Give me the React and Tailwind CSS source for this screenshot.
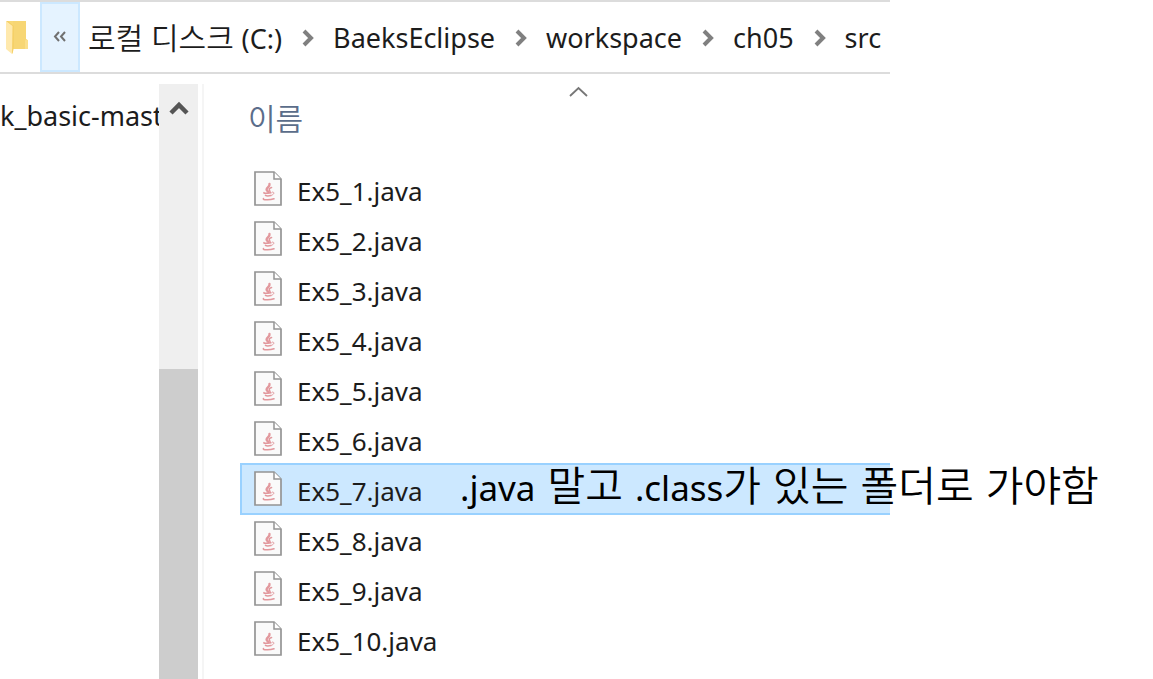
import React from "react";

const files = Array.from({ length: 10 }, (_, i) => `Ex5_${i + 1}.java`);
const crumbs = ["로컬 디스크 (C:)", "BaeksEclipse", "workspace", "ch05", "src"];
const note = ".java 말고 .class가 있는 폴더로 가야함";

const HANGUL_RUN = /([\uac00-\ud7a3 ]*[\uac00-\ud7a3][\uac00-\ud7a3 ]*)/;

// Sets Hangul runs a little larger and lighter than the Latin text beside them.
function Mixed({ text, hangul }) {
  return text.split(HANGUL_RUN).map((part, i) =>
    i % 2 === 1 ? (
      <span key={i} className={hangul}>
        {part}
      </span>
    ) : (
      part
    )
  );
}

function FolderIcon() {
  return (
    <svg width="22" height="34" viewBox="0 0 22 34" className="shrink-0" aria-hidden="true">
      <path d="M1 1h19v18l2 1.500V29H6z" fill="#f8d978" />
      <path d="M7 1h13v18l-1 1.500V29H7z" fill="#f7d674" />
      <path d="M19 20.500l1.500-1.500 1.500 1.500V29h-3z" fill="#fbdf8a" />
      <path d="M0 1l7 4.500V31l-1 3-6-5z" fill="#ffe9ad" />
      <path d="M0 1h2l6 5v21l-1.500 7L6 33 6.500 6z" fill="#f5d067" />
    </svg>
  );
}

function Chevron() {
  return (
    <svg width="15" height="20" viewBox="0 0 15 20" className="shrink-0" aria-hidden="true">
      <path d="M4 3l7 7-7 7" fill="none" stroke="#808080" strokeWidth="4" />
    </svg>
  );
}

function JavaFileIcon() {
  return (
    <svg width="28" height="36" viewBox="0 0 28 36" className="shrink-0" aria-hidden="true">
      <path d="M1 1h19l7 7v26H1z" fill="#fafafa" stroke="#949494" strokeWidth="1.7" />
      <path d="M20 1v7h7" fill="#fff" stroke="#949494" strokeWidth="1.5" />
      <g fill="none" stroke="#e2989d" strokeLinecap="round">
        <path d="M15.500 13c.8 3-4.500 4-2.500 6.500l1.500 1.500" strokeWidth="2.4" />
        <path d="M17.500 16.500c-3 1-2.500 2-1.500 4" strokeWidth="1.6" />
        <path d="M10 21.500c-1 1 2 1 7 .3" strokeWidth="1.4" />
        <path d="M18.500 21c2.500 0 1.500 2.500-.5 3" strokeWidth="1" />
        <path d="M11.500 24.300c1 .8 3 .8 5.500.2" strokeWidth="1.6" />
        <path d="M9.500 27.500c-1.500 1.500 6 1.800 10.500.3" strokeWidth="1.600" />
      </g>
    </svg>
  );
}

export default function App() {
  return (
    <div className="min-h-screen overflow-x-hidden bg-white font-['Noto_Sans','Noto_Sans_CJK_KR',sans-serif] text-[26px] leading-9 text-[#1c1c1c]">
      <div className="flex min-h-screen w-full max-w-[890px] flex-col">
        <nav aria-label="Address" className="flex h-[74px] items-stretch border-y-2 border-[#dcdcdc]">
          <div className="flex w-10 shrink-0 items-center pl-1.5">
            <FolderIcon />
          </div>
          <button
            type="button"
            aria-label="Previous locations"
            className="flex w-10 shrink-0 items-center justify-center border-2 border-[#cce8ff] bg-[#e5f3ff]"
          >
            <svg width="14" height="12" viewBox="0 0 14 12" aria-hidden="true">
              <path d="M6 1L2 5.500l4 4.500M12 1L8 5.500l4 4.500" fill="none" stroke="#707070" strokeWidth="2" />
            </svg>
          </button>
          <ol className="flex items-center gap-[18px] pt-0.5 pl-2 text-[27px] whitespace-nowrap">
            {crumbs.map((name, i) => (
              <li key={name} className="flex items-center gap-[18px]">
                {i > 0 && <Chevron />}
                <a href="#" className="whitespace-pre">
                  <Mixed text={name} hangul="text-[30px] font-[350]" />
                </a>
              </li>
            ))}
          </ol>
        </nav>

        <div className="flex flex-1 items-stretch">
          <aside className="w-[159px] shrink-0 overflow-hidden pt-6 text-[27px] whitespace-nowrap">k_basic-mast</aside>
          <div className="mt-2.5 flex w-[39px] shrink-0 flex-col bg-[#efefef]">
            <button type="button" aria-label="Scroll up" className="flex h-12 shrink-0 items-center justify-center">
              <svg width="20" height="16" viewBox="0 0 20 16" aria-hidden="true">
                <path d="M2 13l8-8 8 8" fill="none" stroke="#555" strokeWidth="4.500" />
              </svg>
            </button>
            <div className="h-[237px] shrink-0" />
            <div className="flex-1 bg-[#cdcdcd]" />
          </div>
          <div className="mt-2.5 ml-1 w-0.5 shrink-0 bg-[#f5f5f5]" />

          <main className="min-w-0 flex-1 pl-9">
            <div className="relative flex h-[90px] items-center pl-2">
              <button type="button" className="text-[30px] font-[350] text-[#5b6d8a]">
                이름
              </button>
              <svg width="20" height="12" viewBox="0 0 20 12" className="absolute top-3 left-1/2 ml-1" aria-hidden="true">
                <path d="M1 10l8.500-8L18 10" fill="none" stroke="#777" strokeWidth="1.800" />
              </svg>
            </div>
            <ul>
              {files.map((name, i) => (
                <li
                  key={name}
                  className={
                    i === 6
                      ? "relative -my-px flex h-[52px] items-center gap-[15px] border-2 border-r-0 border-[#99d1ff] bg-[#cce8ff] pl-3"
                      : "flex h-[50px] items-center gap-[15px] pl-3.5"
                  }
                >
                  <JavaFileIcon />
                  <span className="pt-1">{name}</span>
                  {i === 6 && (
                    <span className="absolute top-0 left-[218px] flex items-baseline gap-3 text-[35px] leading-10 whitespace-nowrap text-black">
                      {note.split(" ").map((word) => (
                        <span key={word}>
                          <Mixed text={word} hangul="text-[41px] font-[350]" />{" "}
                        </span>
                      ))}
                    </span>
                  )}
                </li>
              ))}
            </ul>
          </main>
        </div>
      </div>
    </div>
  );
}
